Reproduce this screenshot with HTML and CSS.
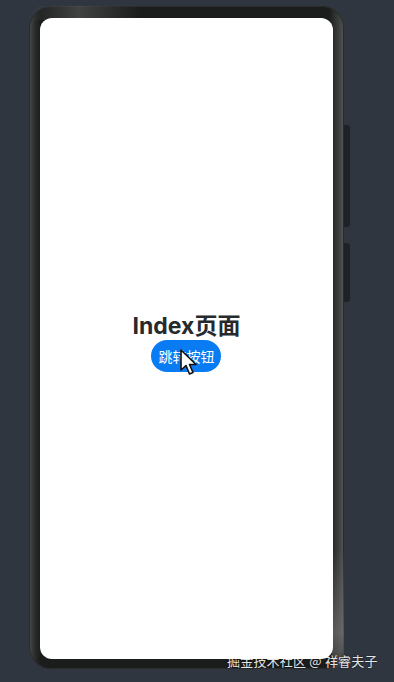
FILE: index.html
```html
<!DOCTYPE html>
<html lang="zh">
<head>
<meta charset="utf-8">
<link rel="stylesheet" href="styles.css">
</head>
<body>
<div class="stage">
  <div class="phone">
    <div class="screen">
      <div class="content">
        <div class="title">Index页面</div>
        <div class="btn">跳转按钮
          <svg class="cursor" width="20" height="28" viewBox="0 0 20 28">
            <path d="M2 1 L2 21 L7 16.5 L10.5 25 L14 23.5 L10.5 15.5 L17 15.5 Z" fill="#fff" stroke="#111" stroke-width="1.6" stroke-linejoin="round"/>
          </svg>
        </div>
      </div>
    </div>
    <div class="side side-1"></div>
    <div class="side side-2"></div>
  </div>
  <div class="watermark">掘金技术社区 @ 祥睿夫子</div>
</div>
</body>
</html>
```
FILE: styles.css
```css
html, body {
  margin: 0;
  padding: 0;
  background: #2f363f;
  width: 394px;
  height: 682px;
  overflow: hidden;
}
.stage {
  position: relative;
  width: 394px;
  height: 682px;
  padding: 6px 0 0 29px;
  box-sizing: border-box;
}
.phone {
  position: relative;
  width: 315px;
  height: 663px;
  box-sizing: border-box;
  padding: 12px 11px 10px 11px;
  border-radius: 22px;
  background:
    linear-gradient(90deg, #4a4b4b 0px, #2a2b2b 6px, #1b1c1c 11px, #1b1c1c 300px, #3a3b3b 309px, #555 315px);
  box-shadow: inset 0 0 0 1px #2a2b2b;
}
.phone::before {
  content: "";
  position: absolute;
  left: 0; top: 0; right: 0; height: 14px;
  border-radius: 22px 22px 0 0;
  background: linear-gradient(90deg, transparent 0, #5a5b5b 50px, #3a3b3b 80px, transparent 110px);
  opacity: 0.6;
}
.phone::after {
  content: "";
  position: absolute;
  right: 0; bottom: 0; width: 12px; height: 120px;
  border-radius: 0 0 22px 0;
  background: linear-gradient(180deg, transparent, #777 70%, #444);
  opacity: 0.6;
}
.screen {
  position: relative;
  z-index: 1;
  width: 293px;
  height: 641px;
  background: #fff;
  border-radius: 12px;
  display: flex;
  align-items: center;
  justify-content: center;
}
.content {
  display: flex;
  flex-direction: column;
  align-items: center;
  margin-top: 6px;
}
.title {
  font-family: "Inter", "Noto Sans CJK SC", sans-serif;
  font-weight: 700;
  font-size: 23px;
  line-height: 28px;
  color: #262a2d;
}
.btn {
  position: relative;
  margin-top: 0px;
  width: 70px;
  height: 32px;
  border-radius: 16px;
  background: #0a7cf3;
  color: #fff;
  font-family: "Noto Sans CJK SC", sans-serif;
  font-size: 14px;
  display: flex;
  align-items: center;
  justify-content: center;
}
.cursor {
  position: absolute;
  left: 28px;
  top: 9px;
}
.side {
  position: absolute;
  left: 315px;
  width: 6px;
  background: #1e2226;
  border-radius: 0 3px 3px 0;
}
.side-1 { top: 119px; height: 102px; }
.side-2 { top: 237px; height: 59px; }
.watermark {
  position: absolute;
  left: 227px;
  top: 652px;
  font-family: "Noto Sans CJK SC", sans-serif;
  font-size: 13px;
  line-height: 17px;
  letter-spacing: 0.2px;
  color: #e4e4e4;
  text-shadow: 0 0 2px rgba(0,0,0,0.7);
  white-space: nowrap;
}
```
